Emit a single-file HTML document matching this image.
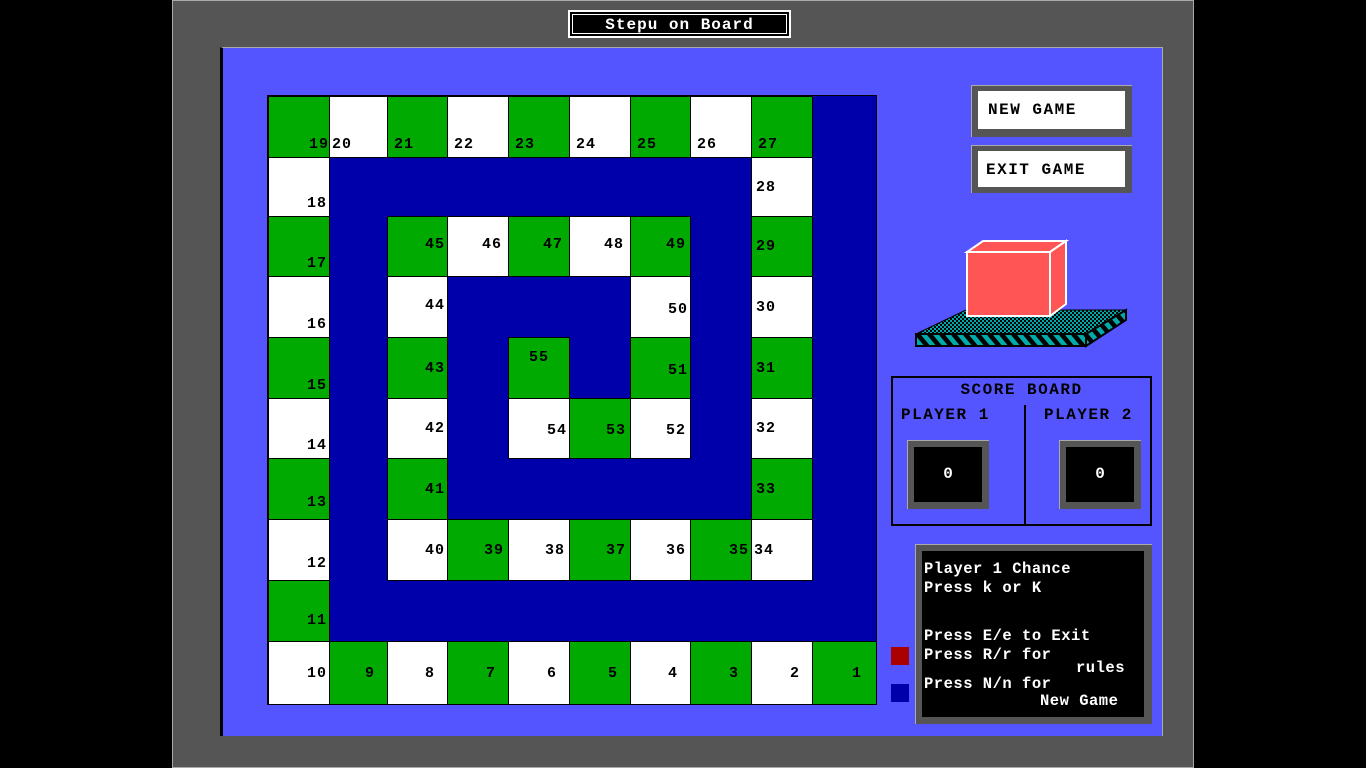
<!DOCTYPE html>
<html><head><style>
body{margin:0;width:1366px;height:768px;background:#000;position:relative;overflow:hidden;font-family:"Liberation Mono",monospace;font-weight:bold}
.a{position:absolute}
.c{position:absolute;box-sizing:border-box;font-size:15px;color:#000;display:flex;padding:0 6px;border:1px solid #000;letter-spacing:1px}
.g{background:#00aa00}.w{background:#fff}
.m{position:absolute;color:#fff;font-size:15.5px;white-space:pre;letter-spacing:0.5px}
</style></head><body>
<div class="a" style="left:172px;top:0;width:1020px;height:766px;background:#555;border:1px solid #aaa"></div>
<div class="a" style="left:220px;top:47px;width:939px;height:688px;background:#5555ff;border-left:3px solid #000;border-top:1px solid #aaa;border-right:1px solid #aaa"></div>
<div class="a" style="left:568px;top:10px;width:219px;height:24px;background:#000;border:2px solid #fff;box-shadow:inset 0 0 0 2px #000,inset 0 0 0 3px #fff;color:#fff;font-size:16px;text-align:center;line-height:26px;letter-spacing:1px">Stepu on Board</div>
<div class="a" style="left:268px;top:96px;width:608px;height:608px;background:#0000aa;outline:1px solid #000"></div>
<!-- cells -->
<div class="c g" style="left:268px;top:96px;width:62px;height:62px;justify-content:flex-end;align-items:flex-end;padding-bottom:4px;padding-right:0">19</div>
<div class="c w" style="left:329px;top:96px;width:59px;height:62px;align-items:flex-end;padding-bottom:4px;padding-left:2px">20</div>
<div class="c g" style="left:387px;top:96px;width:61px;height:62px;align-items:flex-end;padding-bottom:4px">21</div>
<div class="c w" style="left:447px;top:96px;width:62px;height:62px;align-items:flex-end;padding-bottom:4px">22</div>
<div class="c g" style="left:508px;top:96px;width:62px;height:62px;align-items:flex-end;padding-bottom:4px">23</div>
<div class="c w" style="left:569px;top:96px;width:62px;height:62px;align-items:flex-end;padding-bottom:4px">24</div>
<div class="c g" style="left:630px;top:96px;width:61px;height:62px;align-items:flex-end;padding-bottom:4px">25</div>
<div class="c w" style="left:690px;top:96px;width:62px;height:62px;align-items:flex-end;padding-bottom:4px">26</div>
<div class="c g" style="left:751px;top:96px;width:62px;height:62px;align-items:flex-end;padding-bottom:4px">27</div>

<div class="c w" style="left:268px;top:157px;width:62px;height:60px;justify-content:flex-end;align-items:flex-end;padding-bottom:4px;padding-right:2px">18</div>
<div class="c g" style="left:268px;top:216px;width:62px;height:61px;justify-content:flex-end;align-items:flex-end;padding-bottom:4px;padding-right:2px">17</div>
<div class="c w" style="left:268px;top:276px;width:62px;height:62px;justify-content:flex-end;align-items:flex-end;padding-bottom:4px;padding-right:2px">16</div>
<div class="c g" style="left:268px;top:337px;width:62px;height:62px;justify-content:flex-end;align-items:flex-end;padding-bottom:4px;padding-right:2px">15</div>
<div class="c w" style="left:268px;top:398px;width:62px;height:61px;justify-content:flex-end;align-items:flex-end;padding-bottom:4px;padding-right:2px">14</div>
<div class="c g" style="left:268px;top:458px;width:62px;height:62px;justify-content:flex-end;align-items:flex-end;padding-bottom:8px;padding-right:2px">13</div>
<div class="c w" style="left:268px;top:519px;width:62px;height:62px;justify-content:flex-end;align-items:flex-end;padding-bottom:8px;padding-right:2px">12</div>
<div class="c g" style="left:268px;top:580px;width:62px;height:62px;justify-content:flex-end;align-items:flex-end;padding-bottom:12px;padding-right:2px">11</div>

<div class="c w" style="left:268px;top:641px;width:62px;height:64px;justify-content:flex-end;align-items:center;padding-right:2px">10</div>
<div class="c g" style="left:329px;top:641px;width:59px;height:64px;justify-content:flex-end;align-items:center;padding-right:12px">9</div>
<div class="c w" style="left:387px;top:641px;width:61px;height:64px;justify-content:flex-end;align-items:center;padding-right:12px">8</div>
<div class="c g" style="left:447px;top:641px;width:62px;height:64px;justify-content:flex-end;align-items:center;padding-right:12px">7</div>
<div class="c w" style="left:508px;top:641px;width:62px;height:64px;justify-content:flex-end;align-items:center;padding-right:12px">6</div>
<div class="c g" style="left:569px;top:641px;width:62px;height:64px;justify-content:flex-end;align-items:center;padding-right:12px">5</div>
<div class="c w" style="left:630px;top:641px;width:61px;height:64px;justify-content:flex-end;align-items:center;padding-right:12px">4</div>
<div class="c g" style="left:690px;top:641px;width:62px;height:64px;justify-content:flex-end;align-items:center;padding-right:12px">3</div>
<div class="c w" style="left:751px;top:641px;width:62px;height:64px;justify-content:flex-end;align-items:center;padding-right:12px">2</div>
<div class="c g" style="left:812px;top:641px;width:65px;height:64px;justify-content:flex-end;align-items:center;padding-right:14px">1</div>

<div class="c w" style="left:751px;top:157px;width:62px;height:60px;align-items:center;padding-left:4px">28</div>
<div class="c g" style="left:751px;top:216px;width:62px;height:61px;align-items:center;padding-left:4px">29</div>
<div class="c w" style="left:751px;top:276px;width:62px;height:62px;align-items:center;padding-left:4px">30</div>
<div class="c g" style="left:751px;top:337px;width:62px;height:62px;align-items:center;padding-left:4px">31</div>
<div class="c w" style="left:751px;top:398px;width:62px;height:61px;align-items:center;padding-left:4px">32</div>
<div class="c g" style="left:751px;top:458px;width:62px;height:62px;align-items:center;padding-left:4px">33</div>
<div class="c w" style="left:751px;top:519px;width:62px;height:62px;align-items:center;padding-left:2px">34</div>

<div class="c w" style="left:387px;top:519px;width:61px;height:62px;justify-content:flex-end;align-items:center;padding-right:2px">40</div>
<div class="c g" style="left:447px;top:519px;width:62px;height:62px;justify-content:flex-end;align-items:center;padding-right:4px">39</div>
<div class="c w" style="left:508px;top:519px;width:62px;height:62px;justify-content:flex-end;align-items:center;padding-right:4px">38</div>
<div class="c g" style="left:569px;top:519px;width:62px;height:62px;justify-content:flex-end;align-items:center;padding-right:4px">37</div>
<div class="c w" style="left:630px;top:519px;width:61px;height:62px;justify-content:flex-end;align-items:center;padding-right:4px">36</div>
<div class="c g" style="left:690px;top:519px;width:62px;height:62px;justify-content:flex-end;align-items:center;padding-right:2px">35</div>

<div class="c g" style="left:387px;top:216px;width:61px;height:61px;justify-content:flex-end;align-items:center;padding-right:2px;padding-bottom:4px">45</div>
<div class="c w" style="left:387px;top:276px;width:61px;height:62px;justify-content:flex-end;align-items:center;padding-right:2px;padding-bottom:4px">44</div>
<div class="c g" style="left:387px;top:337px;width:61px;height:62px;justify-content:flex-end;align-items:center;padding-right:2px">43</div>
<div class="c w" style="left:387px;top:398px;width:61px;height:61px;justify-content:flex-end;align-items:center;padding-right:2px">42</div>
<div class="c g" style="left:387px;top:458px;width:61px;height:62px;justify-content:flex-end;align-items:center;padding-right:2px">41</div>

<div class="c w" style="left:447px;top:216px;width:62px;height:61px;justify-content:flex-end;align-items:center;padding-right:6px;padding-bottom:4px">46</div>
<div class="c g" style="left:508px;top:216px;width:62px;height:61px;justify-content:flex-end;align-items:center;padding-right:6px;padding-bottom:4px">47</div>
<div class="c w" style="left:569px;top:216px;width:62px;height:61px;justify-content:flex-end;align-items:center;padding-right:6px;padding-bottom:4px">48</div>
<div class="c g" style="left:630px;top:216px;width:61px;height:61px;justify-content:flex-end;align-items:center;padding-right:4px;padding-bottom:4px">49</div>
<div class="c w" style="left:630px;top:276px;width:61px;height:62px;justify-content:flex-end;align-items:center;padding-right:2px;padding-top:4px">50</div>
<div class="c g" style="left:630px;top:337px;width:61px;height:62px;justify-content:flex-end;align-items:center;padding-right:2px;padding-top:4px">51</div>
<div class="c w" style="left:630px;top:398px;width:61px;height:61px;justify-content:flex-end;align-items:center;padding-right:4px;padding-top:4px">52</div>
<div class="c g" style="left:569px;top:398px;width:62px;height:61px;justify-content:flex-end;align-items:center;padding-right:4px;padding-top:4px">53</div>
<div class="c w" style="left:508px;top:398px;width:62px;height:61px;justify-content:flex-end;align-items:center;padding-right:2px;padding-top:4px">54</div>
<div class="c g" style="left:508px;top:337px;width:62px;height:62px;justify-content:center;align-items:flex-start;padding-top:11px">55</div>

<!-- buttons -->
<div class="a" style="left:971px;top:85px;width:161px;height:52px;background:#555;border-top:1px solid #aaa;border-left:1px solid #aaa;box-sizing:border-box"></div>
<div class="a" style="left:978px;top:91px;width:147px;height:38px;background:#fff;font-size:16px;line-height:38px;padding-left:10px;box-sizing:border-box;letter-spacing:1.5px">NEW GAME</div>
<div class="a" style="left:971px;top:145px;width:161px;height:48px;background:#555;border-top:1px solid #aaa;border-left:1px solid #aaa;box-sizing:border-box"></div>
<div class="a" style="left:978px;top:151px;width:147px;height:36px;background:#fff;font-size:16px;line-height:38px;padding-left:8px;box-sizing:border-box;letter-spacing:1.5px">EXIT GAME</div>

<svg class="a" style="left:910px;top:236px" width="220" height="115">
<defs><pattern id="ck" width="4" height="4" patternUnits="userSpaceOnUse"><rect width="4" height="4" fill="#000"/><rect width="2" height="2" fill="#00aaaa"/><rect x="2" y="2" width="2" height="2" fill="#00aaaa"/></pattern>
<pattern id="st" width="12" height="10" patternUnits="userSpaceOnUse" patternTransform="skewX(40)"><rect width="12" height="10" fill="#000"/><rect width="6" height="10" fill="#00aaaa"/></pattern></defs>
<polygon points="6,98 56,74 216,74 176,98" fill="url(#ck)" stroke="#000"/>
<polygon points="6,98 176,98 176,110 6,110" fill="url(#st)" stroke="#000" stroke-width="2"/>
<polygon points="176,98 216,74 216,84 176,110" fill="url(#st)" stroke="#000" stroke-width="2"/>
<polygon points="57,16 140,16 156,5 73,5" fill="#ff5555" stroke="#fff" stroke-width="2"/>
<polygon points="140,16 156,5 156,68 140,80" fill="#ff5555" stroke="#fff" stroke-width="2"/>
<rect x="57" y="16" width="83" height="64" fill="#ff5555" stroke="#fff" stroke-width="2"/>
</svg>

<!-- scoreboard -->
<div class="a" style="left:891px;top:376px;width:261px;height:150px;border:2px solid #000;box-sizing:border-box"></div>
<div class="a" style="left:1024px;top:405px;width:2px;height:120px;background:#000"></div>
<div class="a" style="left:891px;top:381px;width:261px;text-align:center;font-size:16px;letter-spacing:1.5px">SCORE BOARD</div>
<div class="a" style="left:901px;top:406px;font-size:16px;letter-spacing:1.5px">PLAYER 1</div>
<div class="a" style="left:1044px;top:406px;font-size:16px;letter-spacing:1.5px">PLAYER 2</div>
<div class="a" style="left:907px;top:440px;width:82px;height:69px;background:#555;border-top:1px solid #aaa;border-left:1px solid #aaa;box-sizing:border-box"></div>
<div class="a" style="left:914px;top:447px;width:68px;height:55px;background:#000;color:#fff;text-align:center;line-height:55px;font-size:16px">0</div>
<div class="a" style="left:1059px;top:440px;width:82px;height:69px;background:#555;border-top:1px solid #aaa;border-left:1px solid #aaa;box-sizing:border-box"></div>
<div class="a" style="left:1066px;top:447px;width:68px;height:55px;background:#000;color:#fff;text-align:center;line-height:55px;font-size:16px">0</div>

<div class="a" style="left:891px;top:647px;width:18px;height:18px;background:#aa0000"></div>
<div class="a" style="left:891px;top:684px;width:18px;height:18px;background:#0000aa"></div>

<div class="a" style="left:915px;top:544px;width:237px;height:180px;background:#555;border-top:1px solid #aaa;border-left:1px solid #aaa;box-sizing:border-box"></div>
<div class="a" style="left:922px;top:551px;width:222px;height:166px;background:#000"></div>
<div class="m" style="left:924px;top:560px">Player 1 Chance</div>
<div class="m" style="left:924px;top:579px">Press k or K</div>
<div class="m" style="left:924px;top:627px">Press E/e to Exit</div>
<div class="m" style="left:924px;top:646px">Press R/r for</div>
<div class="m" style="left:1076px;top:659px">rules</div>
<div class="m" style="left:924px;top:675px">Press N/n for</div>
<div class="m" style="left:1040px;top:692px">New Game</div>
</body></html>
